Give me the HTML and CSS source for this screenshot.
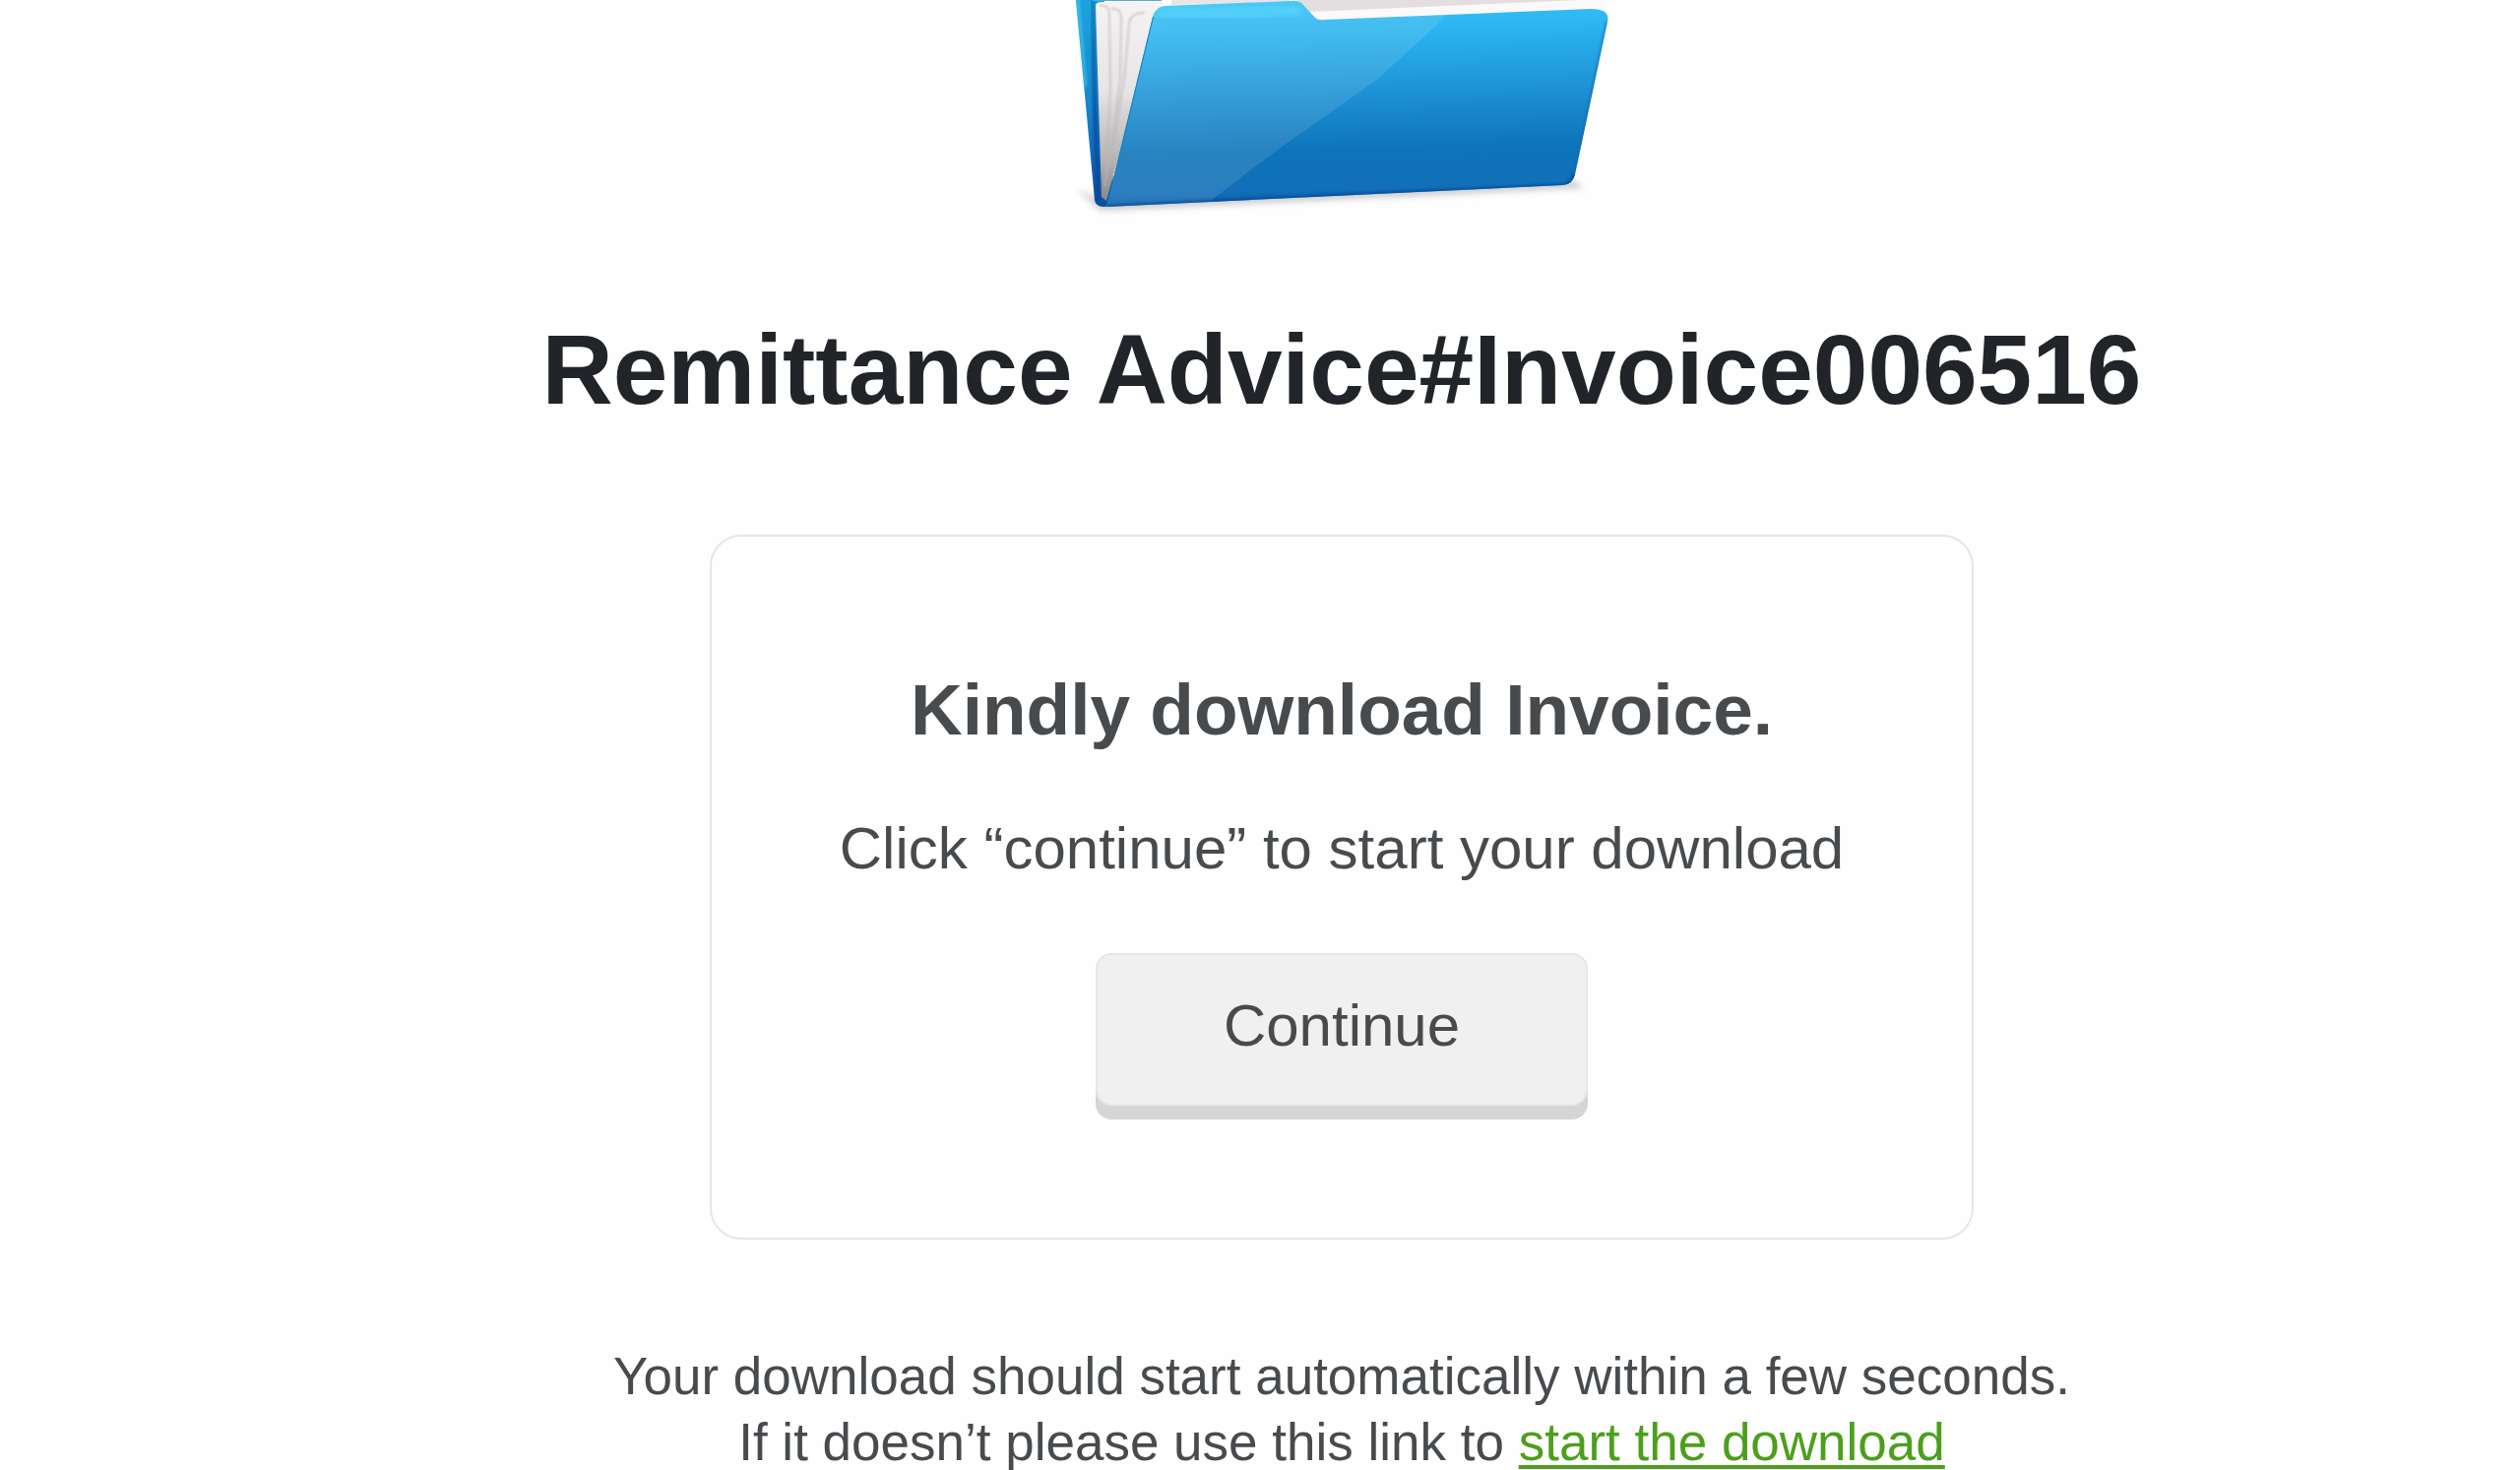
FILE: index.html
```html
<!DOCTYPE html>
<html lang="en">
<head>
    <meta charset="UTF-8">
    <meta name="viewport" content="width=device-width, initial-scale=1.0">
    <title>Remittance Advice</title>
    <link rel="stylesheet" href="styles.css">
</head>
<body>
    <main class="page">
        <svg class="folder" viewBox="3 0 600 240" aria-hidden="true">
            <defs>
                <linearGradient id="front" x1="0" y1="0" x2="0.06" y2="1">
                    <stop offset="0" stop-color="#38c3f8"/>
                    <stop offset="0.2" stop-color="#2ab2ee"/>
                    <stop offset="0.5" stop-color="#1c8fd2"/>
                    <stop offset="0.75" stop-color="#0e74b9"/>
                    <stop offset="0.94" stop-color="#1270b8"/>
                    <stop offset="1" stop-color="#0a5ba8"/>
                </linearGradient>
                <linearGradient id="back" x1="0" y1="0" x2="0" y2="1">
                    <stop offset="0" stop-color="#1ba3e0"/>
                    <stop offset="0.5" stop-color="#1787cc"/>
                    <stop offset="1" stop-color="#0a4f9e"/>
                </linearGradient>
                <linearGradient id="edge" x1="0" y1="0" x2="0" y2="1">
                    <stop offset="0" stop-color="#1583c4"/>
                    <stop offset="0.6" stop-color="#0b57a6"/>
                    <stop offset="1" stop-color="#08479a"/>
                </linearGradient>
                <linearGradient id="paper" x1="0" y1="0" x2="0" y2="1">
                    <stop offset="0" stop-color="#f6f3f4"/>
                    <stop offset="0.45" stop-color="#e6e4e5"/>
                    <stop offset="0.8" stop-color="#b4b2b3"/>
                    <stop offset="1" stop-color="#8a8684"/>
                </linearGradient>
                <filter id="soft" x="-10%" y="-50%" width="120%" height="200%">
                    <feGaussianBlur stdDeviation="3"/>
                </filter>
                <filter id="softer" x="-20%" y="-20%" width="140%" height="140%">
                    <feGaussianBlur stdDeviation="1"/>
                </filter>
                <clipPath id="front-clip">
                    <path d="M64 210 L111 17 Q114 7 123 6 L252 1 Q260 0 264 5 L275 17 Q278 21 286 20 L556 9 Q576 9 573 22 L540 177 Q538 187 528 188 Z"/>
                </clipPath>
            </defs>

            <!-- shadow on the ground -->
            <path d="M34 192 L58 214 L548 191 L540 184 L60 204 Z" fill="#9a9a9a" opacity="0.5" filter="url(#soft)"/>

            <!-- back cover -->
            <path d="M33 0 L52 203 Q53 210 61 210 L72 209 L62 0 Z" fill="url(#back)"/>
            <path d="M35 0 L43 88" stroke="#4fd0ef" stroke-width="3" opacity="0.6" filter="url(#softer)"/>
            <path d="M50 0 L52 100 L56 205" fill="none" stroke="url(#edge)" stroke-width="5" filter="url(#softer)"/>

            <!-- papers -->
            <path d="M53 6 Q53 2 60 2 L122 1 L114 20 L64 204 L59 200 Z" fill="url(#paper)"/>
            <path d="M50 0 H120" stroke="#58a9d2" stroke-width="2"/>
            <g fill="none" stroke="#bcb8ba" stroke-width="2" opacity="0.65" filter="url(#softer)">
                <path d="M57 6 Q67 4 67 15 L68 90 L63 190"/>
                <path d="M69 9 Q80 8 79 20 L78 80 L67 170"/>
                <path d="M103 13 Q88 13 87 24 L82 80 L70 155"/>
            </g>
            <path d="M262 0 L572 0 L566 12 L275 22 Z" fill="#fbf9f9"/>
            <path d="M258 0 H545 L270 12 Z" fill="#e3dedf"/>
            <path d="M130 0 L250 0 L250 2 L130 5 Z" fill="#e9e5e6"/>

            <!-- front cover -->
            <path d="M64 210 L111 17 Q114 7 123 6 L252 1 Q260 0 264 5 L275 17 Q278 21 286 20 L556 9 Q576 9 573 22 L540 177 Q538 187 528 188 Z" fill="url(#front)"/>
            <g clip-path="url(#front-clip)">
                <path d="M40 0 H422 L400 25 L340 80 L245 147 L198 182 L160 212 H40 Z" fill="#fff" opacity="0.11"/>
                <path d="M115 14 Q190 16 262 9" fill="none" stroke="#5fe0ff" stroke-width="12" opacity="0.45" filter="url(#soft)"/>
                <path d="M64 210 L111 17" stroke="#1583b8" stroke-width="2"/>
                <path d="M64 211 L529 189 Q538 187 540 177" fill="none" stroke="#06499c" stroke-width="6" opacity="0.7" filter="url(#softer)"/>
                <path d="M573 22 L540 177" stroke="#0b66b2" stroke-width="4" opacity="0.5" filter="url(#softer)"/>
            </g>
        </svg>

        <h1>Remittance Advice#Invoice006516</h1>

        <section class="card">
            <h2>Kindly download Invoice.</h2>
            <p>Click “continue” to start your download</p>
            <button type="button" class="continue">Continue</button>
        </section>

        <p class="note">
            Your download should start automatically within a few seconds.<br>
            If it doesn’t please use this link to <a href="#">start the download</a>
        </p>
    </main>
</body>
</html>
```
FILE: styles.css
```css
body {
    margin: 0;
    background: #fefefe;
    color: #484b4e;
    font-family: "Liberation Sans", Arial, sans-serif;
}

.page {
    display: flex;
    flex-direction: column;
    align-items: center;
    padding-left: 166px;
    text-align: center;
}

.folder {
    display: block;
    width: 600px;
    max-width: 100%;
}

h1 {
    margin: 75px 0 108px;
    color: #212529;
    font-size: 100px;
    line-height: 120px;
}

.card {
    box-sizing: border-box;
    width: 100%;
    max-width: 1284px;
    padding: 132px 40px 120px;
    border: 2px solid #e6e6e6;
    border-radius: 32px;
}

.card h2 {
    margin: 0 0 61px;
    font-size: 73px;
    line-height: 88px;
}

.card p {
    margin: 0 0 70px;
    font-size: 60px;
    line-height: 72px;
}

.continue {
    display: block;
    min-width: 500px;
    margin: 0 auto 14px;
    padding: 36px 60px 43px;
    border: 2px solid #e6e6e6;
    border-radius: 16px;
    background: #f0f0f0;
    box-shadow: 0 14px 0 #d5d5d5;
    color: #484b4e;
    font-family: inherit;
    font-size: 60px;
    line-height: 72px;
}

.note {
    margin: 105px 0 0;
    font-size: 53px;
    line-height: 67px;
}

.note a {
    color: #4c9f1c;
    text-decoration-thickness: 4px;
    text-underline-offset: 5px;
    text-decoration-skip-ink: none;
}
```
